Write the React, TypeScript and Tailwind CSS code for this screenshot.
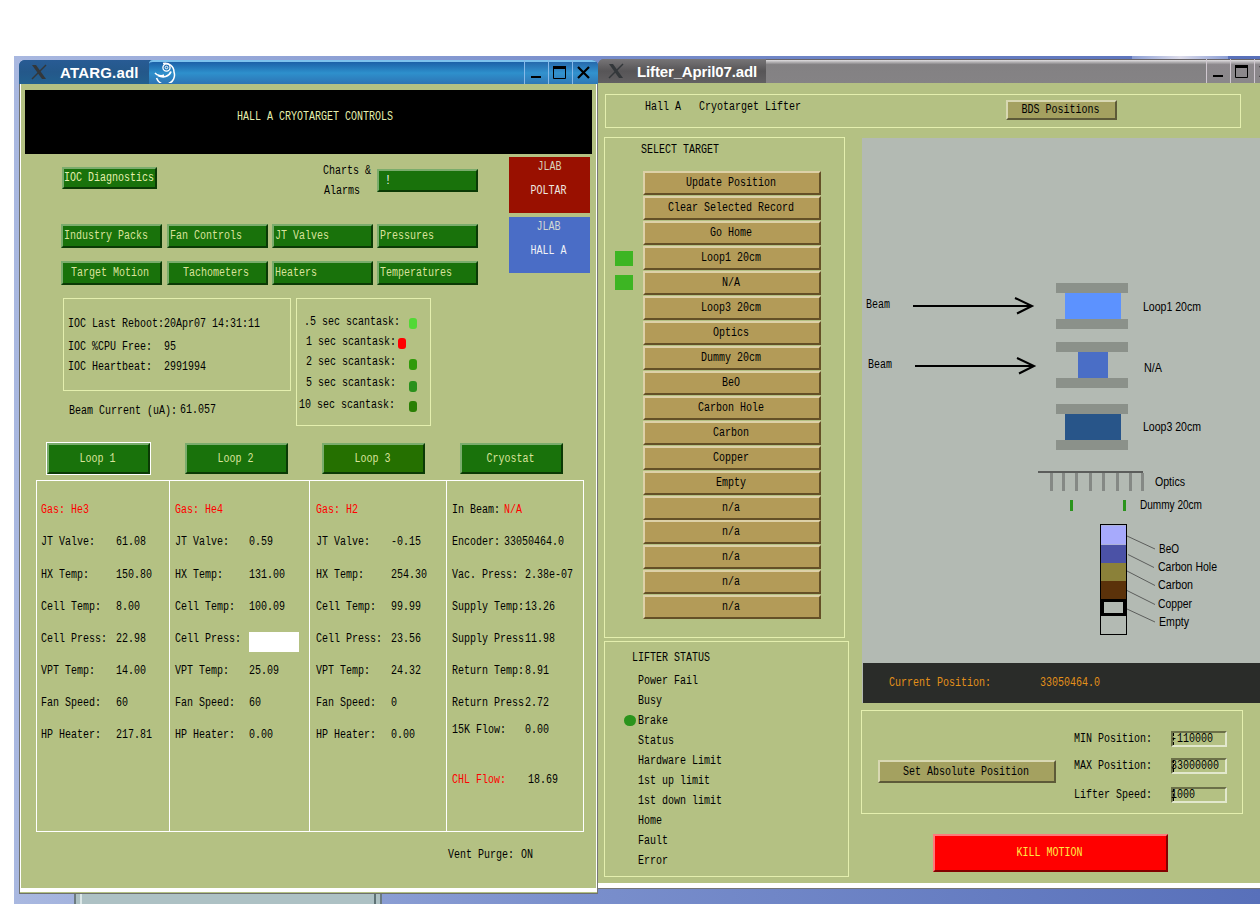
import { ReactNode } from "react";
import clsx from "clsx";

const navButtons = [
  { label: "Industry Packs", centered: false },
  { label: "Fan Controls", centered: false },
  { label: "JT Valves", centered: false },
  { label: "Pressures", centered: false },
  { label: "Target Motion", centered: true },
  { label: "Tachometers", centered: true },
  { label: "Heaters", centered: false },
  { label: "Temperatures", centered: false },
];

const scanTasks = [
  { label: ".5 sec scantask:", row: "h-5 pl-[7px]", dot: "top-1.5 left-[112px] bg-[#52d935]" },
  { label: "1 sec scantask:", row: "h-5 pl-[9px]", dot: "top-1.5 left-[101px] bg-[#ff0000]" },
  { label: "2 sec scantask:", row: "h-5 pl-[9px]", dot: "top-[7px] left-[112px] bg-[#309a0a]" },
  { label: "5 sec scantask:", row: "h-[22px] pl-[9px]", dot: "top-[9px] left-[112px] bg-[#2a901c]" },
  { label: "10 sec scantask:", row: "h-[22px] pl-[2px]", dot: "top-[7px] left-[112px] bg-[#2a7f04]" },
];

const loops = [
  {
    gas: "Gas: He3",
    box: "w-[132px] pl-1",
    label: "w-[75px]",
    values: ["61.08", "150.80", "8.00", "22.98", "14.00", "60", "217.81"],
  },
  {
    gas: "Gas: He4",
    box: "w-[140px] border-l pl-[5px]",
    label: "w-[74px]",
    values: ["0.59", "131.00", "100.09", "", "25.09", "60", "0.00"],
  },
  {
    gas: "Gas: H2",
    box: "w-[137px] border-l pl-[6px]",
    label: "w-[75px]",
    values: ["-0.15", "254.30", "99.99", "23.56", "24.32", "0", "0.00"],
  },
];

const loopLabels = [
  "JT Valve:",
  "HX Temp:",
  "Cell Temp:",
  "Cell Press:",
  "VPT Temp:",
  "Fan Speed:",
  "HP Heater:",
];

const cryostat = [
  { label: "Encoder:", value: "33050464.0", width: "w-[52px]" },
  { label: "Vac. Press:", value: "2.38e-07", width: "w-[73px]" },
  { label: "Supply Temp:", value: "13.26", width: "w-[73px]" },
  { label: "Supply Press", value: "11.98", width: "w-[73px]" },
  { label: "Return Temp:", value: "8.91", width: "w-[73px]" },
  { label: "Return Press", value: "2.72", width: "w-[73px]" },
];

const targets = [
  "Update Position",
  "Clear Selected Record",
  "Go Home",
  "Loop1 20cm",
  "N/A",
  "Loop3 20cm",
  "Optics",
  "Dummy 20cm",
  "BeO",
  "Carbon Hole",
  "Carbon",
  "Copper",
  "Empty",
  "n/a",
  "n/a",
  "n/a",
  "n/a",
  "n/a",
];

const statuses = [
  "Power Fail",
  "Busy",
  "Brake",
  "Status",
  "Hardware Limit",
  "1st up limit",
  "1st down limit",
  "Home",
  "Fault",
  "Error",
];

// Tall and narrow terminal text, 6px per character
const Txt = ({ children, className }: { children: ReactNode; className?: string }) => (
  <span
    className={clsx(
      "inline-block shrink-0 translate-y-[0.7px] scale-y-[1.35] whitespace-pre font-['Liberation_Mono',monospace] text-[10px] leading-[12px]",
      className
    )}
  >
    {children}
  </span>
);

const GreenButton = ({ children, className }: { children?: ReactNode; className?: string }) => (
  <button
    className={clsx(
      "flex items-center border-2 border-t-[#7aac6c] border-l-[#7aac6c] border-r-[#0b3a05] border-b-[#0b3a05] text-[#d9e39b]",
      className
    )}
  >
    {children}
  </button>
);

const WindowButtons = () => (
  <>
    <svg width="24" height="24" className="shrink-0" fill="none" stroke="black">
      <path d="M6 17h10" strokeWidth="2" />
    </svg>
    <svg width="24" height="24" className="shrink-0" fill="none" stroke="black">
      <path d="M4.500 6v12.500h12v-12.500" />
      <path d="M4 7.500h13" strokeWidth="3" />
    </svg>
    <svg width="24" height="24" className="shrink-0" fill="none" stroke="black">
      <path d="M5 7l11 11M16 7l-11 11" strokeWidth="2.200" />
    </svg>
  </>
);

const XLogo = () => (
  <svg width="16" height="16" viewBox="0 0 16 16" fill="none">
    <path d="M1 1l4 0l10 14h-4z" fill="#33373a" />
    <path d="M15 1L1 15" stroke="#33373a" strokeWidth="1.5" />
  </svg>
);

const Swirl = () => (
  <svg width="22" height="22" viewBox="0 0 22 22" fill="none" stroke="white" className="-mt-px">
    <path d="M9 2.500A8.800 8.800 0 0 1 20 11A9 9 0 0 1 2.500 17" strokeWidth="1.500" />
    <path d="M1 12C3 15 8 15 10 14" strokeWidth="1.400" />
    <path d="M4 14.500C9 17 15 16 17 10.500" strokeWidth="1.800" />
    <circle cx="12.500" cy="6.500" r="3.600" strokeWidth="1.300" />
    <circle cx="12.500" cy="6.500" r="1.300" />
  </svg>
);

const AtargWindow = () => (
  <div className="mt-1 ml-[5px] flex h-[834px] w-[579px] shrink-0 flex-col">
    <div className="flex h-6 shrink-0 overflow-hidden rounded-t-md bg-linear-to-b from-[#1c548c] via-[#2d7fc0] to-[#2e98d0] font-['Liberation_Sans',sans-serif]">
      <div className="flex w-[130px] items-center bg-linear-to-b from-[#285b94] via-[#24588a] to-[#22608f] pl-3">
        <XLogo />
        <span className="ml-[13px] text-[15px] leading-none font-bold tracking-[0.2px] text-white">
          ATARG.adl
        </span>
      </div>
      <div className="flex flex-1 rounded-tl border-t-2 border-[#7cc2ee] bg-linear-to-b from-[#1c60a8] via-[#2e90cc] to-[#2d74b4] pl-[5px]">
        <Swirl />
      </div>
      <div className="flex w-[74px] border-t-2 border-[#7cc2ee] bg-linear-to-b from-[#2669ac] via-[#3292ce] to-[#2f78b6] *:-mt-0.5 *:border-l *:border-[#86b9e8]">
        <WindowButtons />
      </div>
    </div>

    <div className="flex-1 border-x border-b border-[#6e706c] border-r-[#777] bg-[#b4c183]">
      <div className="h-[808px] border-x border-b-4 border-white pt-1.5">
        <div className="ml-1 flex h-16 w-[567px] bg-black pt-[25px] pl-[212px] text-[#e4efae]">
          <Txt>HALL A CRYOTARGET CONTROLS</Txt>
        </div>

        <div className="flex">
          <div className="w-[488px] pl-10">
            <div className="flex pt-[13px] pl-px">
              <GreenButton className="h-[22px] w-[95px] bg-[#19720b]">
                <Txt className="text-[#e4efae]">IOC Diagnostics</Txt>
              </GreenButton>
              <div className="ml-[166px] flex w-[54px] flex-col items-start gap-2 -mt-0.5">
                <Txt>Charts &amp;</Txt>
                <Txt className="ml-px">Alarms</Txt>
              </div>
              <GreenButton className="mt-0.5 h-[23px] w-[101px] bg-[#19720b] pl-1.5">
                <Txt className="text-white">!</Txt>
              </GreenButton>
            </div>
            <div className="mt-[27px] grid w-[418px] grid-cols-[102px_101px_101px_101px] gap-x-1 gap-y-[13px]">
              {navButtons.map(({ label, centered }) => (
                <GreenButton
                  key={label}
                  className={clsx(
                    "h-6 w-[101px] bg-[#19720b]",
                    centered ? "justify-center pr-[3px]" : "pl-px"
                  )}
                >
                  <Txt>{label}</Txt>
                </GreenButton>
              ))}
            </div>
          </div>
          <div className="w-[81px] pt-[3px]">
            <div className="flex h-14 flex-col items-center gap-3 bg-[#991000] pt-1 text-[#eee8e0]">
              <Txt className="text-[#d6d3bd]">JLAB</Txt>
              <Txt className="-ml-0.5">POLTAR</Txt>
            </div>
            <div className="mt-1 flex h-14 flex-col items-center gap-3 bg-[#4a6dc6] pt-1 text-[#f0f2f6]">
              <Txt className="-ml-0.5 text-[#d3d8d2]">JLAB</Txt>
              <Txt className="-ml-0.5">HALL A</Txt>
            </div>
          </div>
        </div>

        <div className="mt-[13px] flex h-32 pl-[42px]">
          <div className="w-[228px]">
            <div className="flex h-[93px] flex-col items-start border border-[#e4efae] pt-[19px] pl-1">
              <Txt>IOC Last Reboot:20Apr07 14:31:11</Txt>
              <Txt className="mt-[11px]">{"IOC %CPU Free:  95"}</Txt>
              <Txt className="mt-2">{"IOC Heartbeat:  2991994"}</Txt>
            </div>
            <div className="flex pt-[14px] pl-1.5">
              <Txt className="w-[111px]">Beam Current (uA):</Txt>
              <Txt className="-mt-px">61.057</Txt>
            </div>
          </div>
          <div className="ml-[5px] w-[135px] border border-[#e4efae] pt-[13px]">
            {scanTasks.map(({ label, row, dot }) => (
              <div key={label} className={clsx("relative flex items-center", row)}>
                <Txt>{label}</Txt>
                <span className={clsx("absolute h-[11px] w-2 rounded-[3px]", dot)} />
              </div>
            ))}
          </div>
        </div>

        <div className="mt-4 flex h-[33px] items-center pl-[25px]">
          <div className="mr-[34px] border border-white">
            <GreenButton className="h-[31px] w-[103px] justify-center bg-[#19720b]">
              <Txt className="-ml-0.5">Loop 1</Txt>
            </GreenButton>
          </div>
          <GreenButton className="mr-[34px] h-[31px] w-[103px] justify-center bg-[#19720b]">
            <Txt className="-ml-0.5">Loop 2</Txt>
          </GreenButton>
          <GreenButton className="mr-[35px] h-[31px] w-[103px] justify-center bg-[#257000]">
            <Txt className="-ml-0.5">Loop 3</Txt>
          </GreenButton>
          <GreenButton className="h-[31px] w-[103px] justify-center bg-[#19720b]">
            <Txt className="-ml-0.5">Cryostat</Txt>
          </GreenButton>
        </div>

        <div className="mt-[5px] ml-[15px] flex h-[352px] w-[548px] border border-white">
          {loops.map((loop) => (
            <div key={loop.gas} className={clsx("border-white pt-[13px]", loop.box)}>
              <div className="flex h-8 items-center text-[#ff0000]">
                <Txt>{loop.gas}</Txt>
              </div>
              {loopLabels.map((label, i) => (
                <div key={label} className={clsx("flex h-8 items-center", i === 1 && "mt-px")}>
                  <Txt className={loop.label}>{label}</Txt>
                  {loop.values[i] ? (
                    <Txt>{loop.values[i]}</Txt>
                  ) : (
                    <span className="mt-1.5 h-5 w-[50px] bg-white" />
                  )}
                </div>
              ))}
            </div>
          ))}
          <div className="flex-1 border-l border-white pt-[13px] pl-[5px]">
            <div className="flex h-8 items-center">
              <Txt className="w-[52px]">In Beam:</Txt>
              <Txt className="text-[#ff0000]">N/A</Txt>
            </div>
            {cryostat.map(({ label, value, width }, i) => (
              <div key={label} className={clsx("flex h-8 items-center", i === 1 && "mt-px")}>
                <Txt className={width}>{label}</Txt>
                <Txt>{value}</Txt>
              </div>
            ))}
            <div className="-mt-[5px] flex h-8 items-center">
              <Txt className="w-[73px]">15K Flow:</Txt>
              <Txt>0.00</Txt>
            </div>
            <div className="mt-[18px] flex h-8 items-center">
              <Txt className="w-[76px] text-[#ff0000]">CHL Flow:</Txt>
              <Txt>18.69</Txt>
            </div>
          </div>
        </div>
        <div className="flex pt-[17px] pl-[427px]">
          <Txt className="w-[73px]">Vent Purge:</Txt>
          <Txt>ON</Txt>
        </div>
      </div>
    </div>
  </div>
);

const InputField = ({ label, value, className }: { label: string; value: string; className?: string }) => (
  <div className={clsx("flex h-4 items-center", className)}>
    <Txt className="w-[97px]">{label}</Txt>
    <div className="relative flex h-4 w-14 items-center border-2 border-t-[#6b7048] border-l-[#6b7048] border-r-[#e2e8cd] border-b-[#e2e8cd]">
      <span className="absolute top-0 left-0 h-3 border-l border-dashed border-black" />
      <Txt className="-ml-0.5">{value}</Txt>
    </div>
  </div>
);

const Holder = ({ x, y, width, color }: { x: number; y: number; width: number; color: string }) => (
  <g>
    <rect x={1056} y={y} width={72} height={10} fill="#8b918a" />
    <rect x={x} y={y + 10} width={width} height={26} fill={color} />
    <rect x={1056} y={y + 36} width={72} height={10} fill="#8b918a" />
  </g>
);

const Label = ({ x, y, width, children }: { x: number; y: number; width: number; children: string }) => (
  <text x={x} y={y} textLength={width} lengthAdjust="spacingAndGlyphs">
    {children}
  </text>
);

const TargetDiagram = () => (
  <svg
    width="398"
    height="525"
    viewBox="862 138 398 525"
    className="block bg-[#b3bab3] font-['Liberation_Sans',sans-serif] text-[12px]"
  >
    <g className="font-['Liberation_Mono',monospace] text-[10px]">
      <text transform="translate(866 308) scale(1 1.35)">Beam</text>
      <text transform="translate(868 368) scale(1 1.35)">Beam</text>
    </g>
    <g fill="none" stroke="black" strokeWidth="2">
      <path d="M913 306h119M1015 298l17 8l-15 7.500" />
      <path d="M915 366h119M1017 358l17 8l-15 7.500" />
    </g>

    <Holder x={1065} y={283} width={56} color="#5c92ff" />
    <Holder x={1078} y={342} width={30} color="#4a6ec6" />
    <Holder x={1065} y={404} width={56} color="#285589" />
    <Label x={1143} y={311} width={58}>Loop1 20cm</Label>
    <Label x={1144} y={372} width={18}>N/A</Label>
    <Label x={1143} y={431} width={58}>Loop3 20cm</Label>

    <rect x={1038} y={471} width={105} height={2} fill="#5b5d5b" />
    {[1050, 1062, 1075, 1089, 1102, 1116, 1129, 1141].map((x) => (
      <rect key={x} x={x} y={473} width={3} height={18} fill="#858985" />
    ))}
    <Label x={1155} y={486} width={30}>Optics</Label>
    <rect x={1070} y={500} width={3} height={11} fill="#2a941c" />
    <rect x={1123} y={500} width={3} height={11} fill="#2a941c" />
    <Label x={1140} y={509} width={62}>Dummy 20cm</Label>

    <rect x={1101} y={525.500} width={25} height={19} fill="#a7aafc" />
    <rect x={1101} y={545} width={25} height={18} fill="#4b52a6" />
    <rect x={1101} y={563} width={25} height={18} fill="#8b8139" />
    <rect x={1101} y={581} width={25} height={18} fill="#5b320a" />
    <rect x={1100.500} y={524.500} width={26} height={110} fill="none" stroke="black" />
    <rect x={1102.500} y={600.500} width={22} height={14} fill="none" stroke="black" strokeWidth="3" />
    <path
      d="M1127 536l28 13M1128 554.500l26 13M1127 571l28 14.500M1127 590.500l28 14M1127 609l28 13"
      stroke="#5b5d5b"
      fill="none"
    />
    <Label x={1159} y={553} width={20}>BeO</Label>
    <Label x={1158} y={571} width={59}>Carbon Hole</Label>
    <Label x={1158} y={589} width={35}>Carbon</Label>
    <Label x={1158} y={608} width={34}>Copper</Label>
    <Label x={1159} y={626} width={30}>Empty</Label>
  </svg>
);

const LifterWindow = () => (
  <div className="flex h-[833px] w-[662px] shrink-0 flex-col overflow-hidden">
    <div className="ml-[534px] h-[3px] w-[96px] shrink-0 bg-linear-to-r from-[#8c9ed4] via-[#dddcea] to-[#8c9ed4]" />
    <div className="flex h-6 shrink-0 overflow-hidden rounded-tl-md bg-[#69676a] font-['Liberation_Sans',sans-serif]">
      <div className="flex w-[168px] items-center bg-linear-to-b from-[#777577] via-[#575557] to-[#626062] pl-2.5">
        <XLogo />
        <span className="ml-[13px] text-[15px] leading-none font-bold tracking-[-0.14px] text-white">
          Lifter_April07.adl
        </span>
      </div>
      <div className="flex-1 border-t border-[#686468] bg-linear-to-b from-[#e0dee0] via-[#838183] via-20% to-[#858385]" />
      <div className="flex w-[54px] border-t border-[#686468] bg-linear-to-b from-[#e0dee0] via-[#8c888c] via-20% to-[#8a878a] *:-mt-px *:border-l *:border-[#d0c8d0]">
        <WindowButtons />
      </div>
    </div>

    <div className="h-[806px] shrink-0 border-b border-[#777] bg-[#b4c183]">
      <div className="h-[805px] border-b-[5px] border-white pt-[11px]">
        <div className="ml-[7px] flex h-[34px] w-[636px] border border-[#e4efae] pl-[39px]">
          <Txt className="mt-1.5 h-3 w-[361px]">{"Hall A   Cryotarget Lifter"}</Txt>
          <button className="mt-[5px] flex h-5 w-[111px] items-center justify-center border-2 border-t-[#d8d8b2] border-l-[#d8d8b2] border-r-[#5d5a38] border-b-[#5d5a38] bg-[#a4a160]">
            <Txt className="-ml-0.5">BDS Positions</Txt>
          </button>
        </div>

        <div className="flex">
          <div className="mt-[9px] w-[263px] pl-1.5">
            <div className="h-[501px] w-[241px] border border-[#e4efae] pt-[6px]">
              <Txt className="mb-[15px] ml-9 align-top">SELECT TARGET</Txt>
              {targets.map((target, i) => (
                <div key={i} className={clsx("flex h-[25px]", i === 14 && "-mt-px")}>
                  <div className="w-[38px] pt-[5px] pl-2.5">
                    {(i === 3 || i === 4) && (
                      <div className={clsx("h-[15px] w-[18px] bg-[#3db523]", i === 4 && "-mt-px")} />
                    )}
                  </div>
                  <button className="flex h-6 w-[178px] items-center justify-center border-2 border-t-[#ddd1a8] border-l-[#ddd1a8] border-r-[#645027] border-b-[#645027] bg-[#b39b58] pr-0.5">
                    <Txt>{target}</Txt>
                  </button>
                </div>
              ))}
            </div>
            <div className="mt-[3px] h-[236px] w-[245px] border border-[#e4efae] pt-2.5">
              <div className="flex h-[19px] items-start pl-[27px]">
                <Txt>LIFTER STATUS</Txt>
              </div>
              {statuses.map((status) => (
                <div key={status} className="flex h-5 items-center pl-[19px]">
                  <span
                    className={clsx(
                      "mr-0.5 h-[11px] w-3 rounded-full",
                      status === "Brake" && "-mt-0.5 bg-[#2a941c]"
                    )}
                  />
                  <Txt>{status}</Txt>
                </div>
              ))}
            </div>
          </div>

          <div className="mt-[10px] w-[399px]">
            <div className="pl-px">
              <TargetDiagram />
              <div className="border-l border-[#b3bab3]">
                <div className="flex h-10 items-center bg-[#2a2c29] pl-[26px] text-[#e39119]">
                  <Txt className="w-[151px]">Current Position:</Txt>
                  <Txt>33050464.0</Txt>
                </div>
              </div>
            </div>
            <div className="mt-[7px] flex h-[104px] w-[382px] border border-[#e4efae]">
              <button className="mt-[49px] ml-4 flex h-[23px] w-[178px] items-center justify-center border-2 border-t-[#d8d8b2] border-l-[#d8d8b2] border-r-[#5d5a38] border-b-[#5d5a38] bg-[#a4a160]">
                <Txt className="-ml-0.5">Set Absolute Position</Txt>
              </button>
              <div className="pt-5 pl-[18px]">
                <InputField label="MIN Position:" value="-110000" />
                <InputField label="MAX Position:" value="33000000" className="mt-[11px]" />
                <InputField label="Lifter Speed:" value="1000" className="mt-[13px]" />
              </div>
            </div>
            <button className="mt-5 ml-[72px] flex h-[38px] w-[235px] items-center justify-center border-2 border-t-[#ff7a7a] border-l-[#ff7a7a] border-r-[#850000] border-b-[#850000] bg-[#ff0000] text-[#ffea45]">
              <Txt className="-ml-0.5">KILL MOTION</Txt>
            </button>
          </div>
        </div>
      </div>
    </div>
  </div>
);

export default function App() {
  return (
    <div className="h-[904px] w-[1260px] overflow-hidden bg-white pt-14 pl-3.5 text-black">
      <div className="h-[848px] bg-linear-to-r from-[#a9b8e0] via-[#7a8fcc] via-45% to-[#5870ba]">
        <div className="flex h-[838px] items-start">
          <AtargWindow />
          <LifterWindow />
        </div>
        <div className="ml-[60px] flex h-2.5 w-[308px] border-x-2 border-[#6c7b80] bg-[#adc1c4] px-1">
          <div className="flex-1 border-x-2 border-l-[#dbe7e7] border-r-[#5e7275]" />
        </div>
      </div>
    </div>
  );
}
